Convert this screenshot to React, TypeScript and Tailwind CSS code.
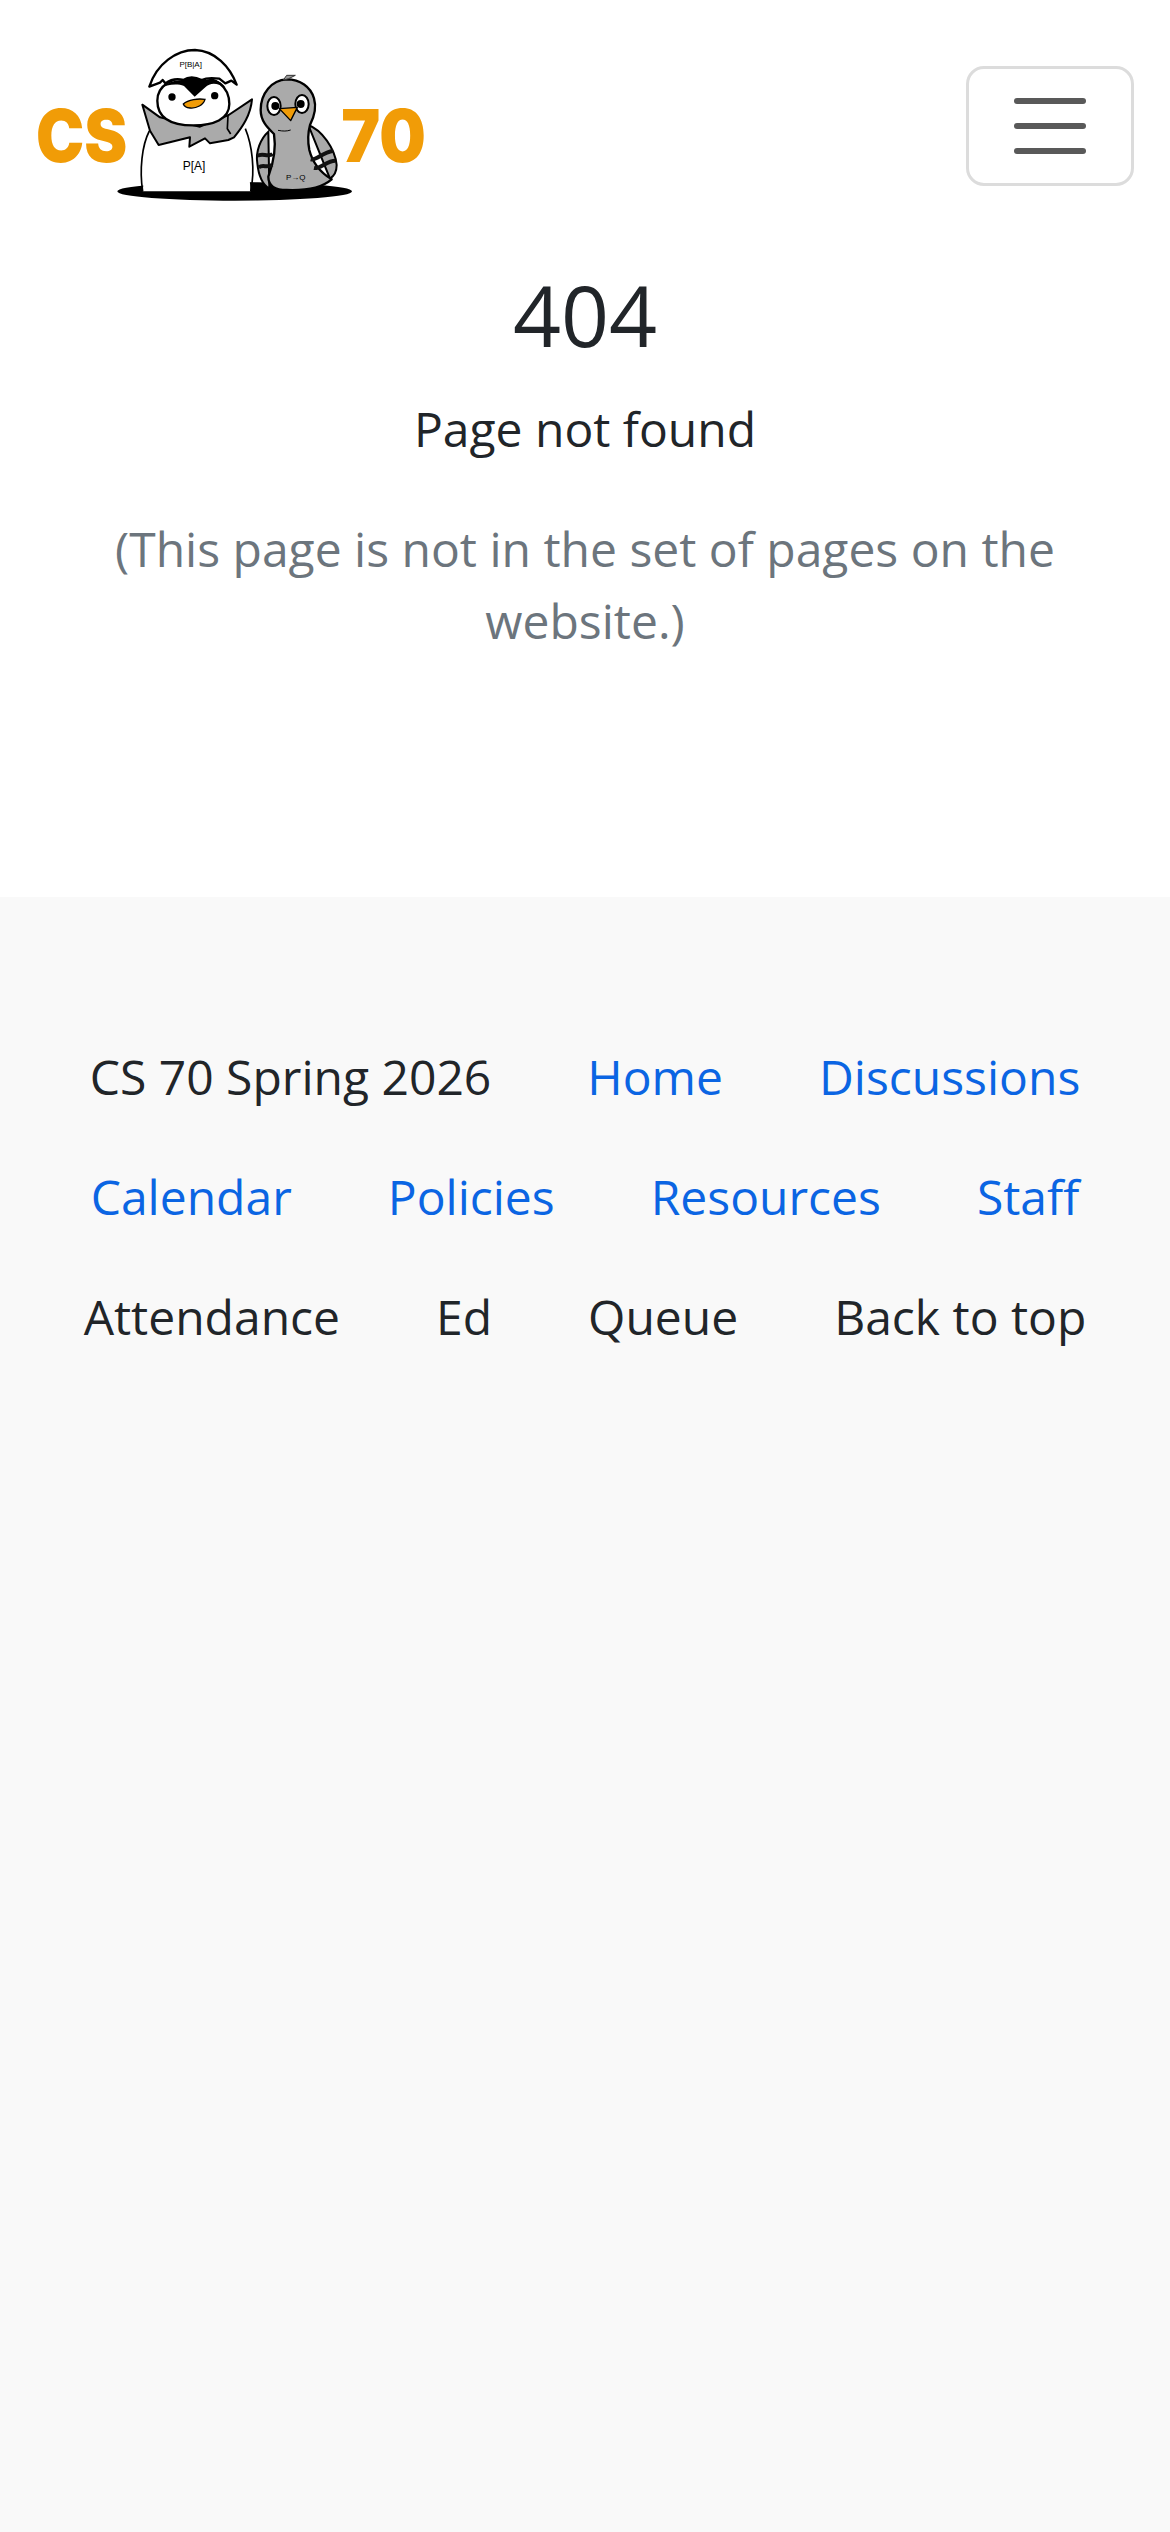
import React from 'react';

const Logo: React.FC = () => (
  <svg viewBox="0 0 1260 570" className="w-[420px] h-[190px] block">
    <text x="48" y="396" fontFamily="Inter, sans-serif" fontWeight={900} fontSize="218" fill="#f19c07" textLength="274" lengthAdjust="spacingAndGlyphs">CS</text>
    <text x="964" y="396" fontFamily="Inter, sans-serif" fontWeight={900} fontSize="218" fill="#f19c07" textLength="254" lengthAdjust="spacingAndGlyphs">70</text>

    {/* shadow */}
    <ellipse cx="644" cy="484" rx="352" ry="28" fill="#000" />

    {/* penguin body */}
    <path d="M388 300 L676 296 L692 484 L368 484 Z" fill="#fff" />
    <path d="M388 303 C366 345 358 420 368 484" fill="none" stroke="#000" strokeWidth="5" />
    <path d="M676 296 C696 345 706 420 692 484" fill="none" stroke="#000" strokeWidth="5" />
    {/* shell wings */}
    <path d="M367 224 L420 262 L540 290 L626 255 L696 208 C692 255 668 290 642 322 L625 330 L570 340 L555 325 L508 350 L510 322 L416 345 L390 302 Z" fill="#aaaaaa" stroke="#000" strokeWidth="6" strokeLinejoin="round" />
    <path d="M624 256 L622 296 L632 312" fill="none" stroke="#000" strokeWidth="5" />
    {/* penguin head */}
    <path d="M412 212 C412 165 460 140 520 140 C590 140 628 170 628 222 C628 268 580 286 520 286 C460 286 412 268 412 212 Z" fill="#fff" stroke="#000" strokeWidth="7" />
    {/* head markings */}
    <path d="M420 176 C450 150 480 150 492 150 C510 136 540 136 556 150 C580 146 600 150 616 172 C590 158 570 158 556 172 L524 200 L492 168 C470 160 440 164 420 176 Z" fill="#000" />
    {/* shell top */}
    <path d="M388 170 C410 100 470 60 525 60 C585 62 630 110 650 164 L634 152 L616 160 L598 146 C570 142 555 145 545 150 C520 138 505 140 490 150 C470 145 450 150 436 160 L428 150 L420 158 Z" fill="#fff" stroke="#000" strokeWidth="7" strokeLinejoin="round" />
    <circle cx="456" cy="201" r="11" fill="#000" />
    <circle cx="584" cy="197" r="11" fill="#000" />
    <path d="M490 222 C505 208 535 205 555 208 C550 225 530 236 510 234 C500 233 492 228 490 222 Z" fill="#f19c07" stroke="#000" strokeWidth="4" />
    <text x="512" y="110" textAnchor="middle" fontFamily="'Liberation Sans', sans-serif" fontSize="24" fill="#000">P[B|A]</text>
    <text x="522" y="420" textAnchor="middle" fontFamily="'Liberation Sans', sans-serif" fontSize="36" fill="#000">P[A]</text>

    {/* pigeon wings */}
    <path d="M745 305 C722 325 706 365 712 400 C716 440 730 465 748 476 Z" fill="#aaaaaa" stroke="#000" strokeWidth="6" />
    <path d="M865 285 C905 300 945 355 950 405 C950 425 942 438 930 446 Z" fill="#aaaaaa" stroke="#000" strokeWidth="6" />
    {/* pigeon body */}
    <path d="M800 148 C755 150 722 190 722 240 C722 275 745 295 762 312 C768 350 760 400 745 440 C745 465 760 480 800 480 C850 482 900 478 935 448 C905 430 878 400 868 360 C862 330 866 300 870 285 C885 255 888 225 882 205 C872 170 840 148 800 148 Z" fill="#aaaaaa" stroke="#000" strokeWidth="7" strokeLinejoin="round" />
    <path d="M790 150 L800 136 L826 136 L806 146 Z" fill="#999" stroke="#333" strokeWidth="3" />
    {/* wing bands */}
    <path d="M712 378 C725 368 745 382 758 372" fill="none" stroke="#111" strokeWidth="12" />
    <path d="M716 412 C730 402 742 416 756 404" fill="none" stroke="#111" strokeWidth="12" />
    <path d="M872 388 C890 392 905 368 940 362" fill="none" stroke="#111" strokeWidth="12" />
    <path d="M882 414 C900 418 920 392 946 392" fill="none" stroke="#111" strokeWidth="12" />
    {/* eyes */}
    <ellipse cx="762" cy="228" rx="20" ry="27" fill="#fff" stroke="#000" strokeWidth="6" />
    <ellipse cx="846" cy="222" rx="20" ry="27" fill="#fff" stroke="#000" strokeWidth="6" />
    <circle cx="766" cy="228" r="12" fill="#000" />
    <circle cx="842" cy="222" r="12" fill="#000" />
    <path d="M778 236 L832 232 L812 272 Z" fill="#f19c07" stroke="#000" strokeWidth="4" strokeLinejoin="round" />
    <path d="M774 301 C790 304 800 304 812 300" fill="none" stroke="#000" strokeWidth="3" />
    <text x="827" y="449" textAnchor="middle" fontFamily="'Liberation Sans', sans-serif" fontSize="24" fill="#000">P→Q</text>
  </svg>
);

const Row: React.FC<{ children: React.ReactNode }> = ({ children }) => (
  <div className="w-full flex justify-center gap-[96px] h-[120px] items-center">{children}</div>
);

const App: React.FC = () => {
  return (
    <div className="min-h-[2532px] flex flex-col bg-white font-['Open_Sans',sans-serif] text-[48px] leading-[72px] text-[#212529]">
      <header className="flex items-start justify-between pl-[20px] pr-[36px] pt-[30px]">
        <Logo />
        <button className="mt-[36px] w-[168px] h-[120px] flex flex-col items-center justify-center gap-[19px] rounded-[18px] border-[3px] border-[#dcdcdc]">
          <span className="block w-[72px] h-[6px] rounded-full bg-[#595959]" />
          <span className="block w-[72px] h-[6px] rounded-full bg-[#595959]" />
          <span className="block w-[72px] h-[6px] rounded-full bg-[#595959]" />
        </button>
      </header>

      <main className="h-[677px] flex flex-col items-center px-[96px] pt-[45px] text-center">
        <h1 className="text-[84px] leading-[100px] mb-[28px]">404</h1>
        <p className="mb-[48px]">Page not found</p>
        <p className="text-[#6c757d]">(This page is not in the set of pages on the website.)</p>
      </main>

      <footer className="flex-1 bg-[#f9f9f9] pt-[120px]">
        <nav className="flex flex-wrap justify-center">
          <Row>
            <span>CS 70 Spring 2026</span>
            <a className="text-[#0b65e3]">Home</a>
            <a className="text-[#0b65e3]">Discussions</a>
          </Row>
          <Row>
            <a className="text-[#0b65e3]">Calendar</a>
            <a className="text-[#0b65e3]">Policies</a>
            <a className="text-[#0b65e3]">Resources</a>
            <a className="text-[#0b65e3]">Staff</a>
          </Row>
          <Row>
            <a>Attendance</a>
            <a>Ed</a>
            <a>Queue</a>
            <a>Back to top</a>
          </Row>
        </nav>
      </footer>
    </div>
  );
};

export default App;
